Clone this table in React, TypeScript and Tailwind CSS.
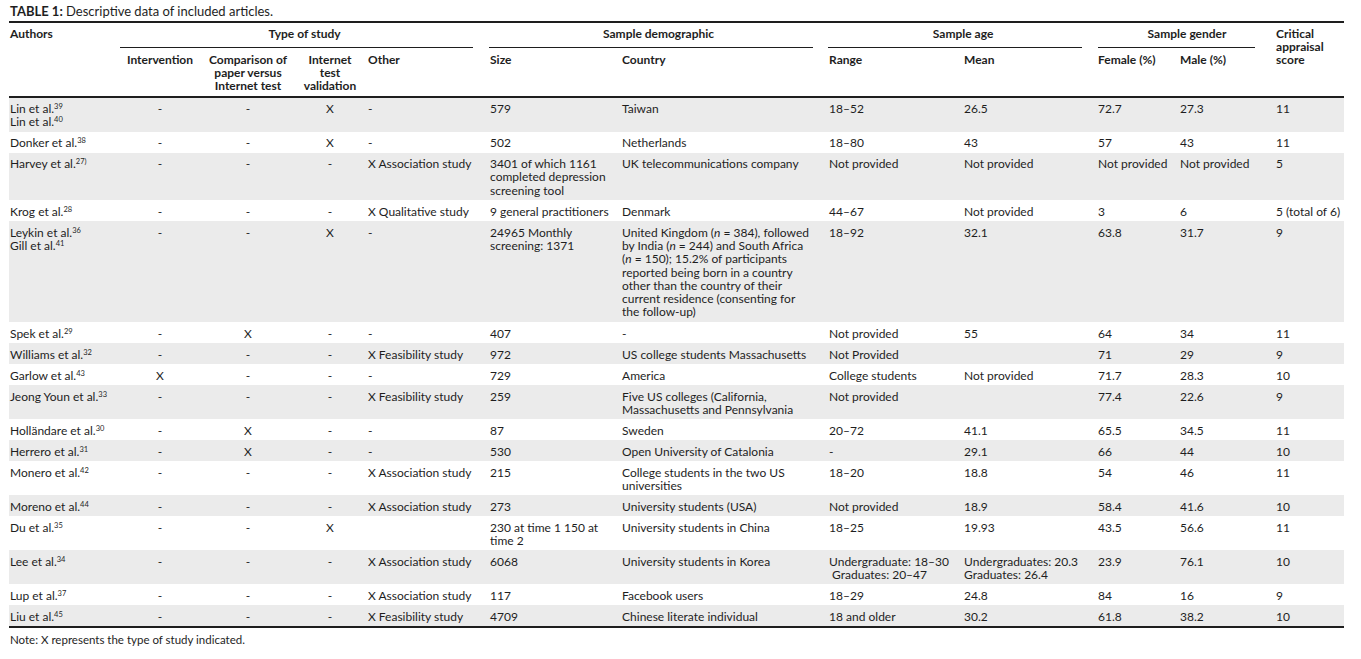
import * as React from "react"

type Row = {
   authors: [string, string][]
   iv: string
   cmp: string
   inet: string
   other: string
   size: string[]
   country: React.ReactNode[]
   range: string[]
   mean: string[]
   f: string
   m: string
   score: string
}

const n = <i>n</i>

const rows: Row[] = [
   { authors: [["Lin et al.", "39"], ["Lin et al.", "40"]], iv: "-", cmp: "-", inet: "X", other: "-", size: ["579"], country: ["Taiwan"], range: ["18–52"], mean: ["26.5"], f: "72.7", m: "27.3", score: "11" },
   { authors: [["Donker et al.", "38"]], iv: "-", cmp: "-", inet: "X", other: "-", size: ["502"], country: ["Netherlands"], range: ["18–80"], mean: ["43"], f: "57", m: "43", score: "11" },
   { authors: [["Harvey et al.", "27)"]], iv: "-", cmp: "-", inet: "-", other: "X Association study", size: ["3401 of which 1161", "completed depression", "screening tool"], country: ["UK telecommunications company"], range: ["Not provided"], mean: ["Not provided"], f: "Not provided", m: "Not provided", score: "5" },
   { authors: [["Krog et al.", "28"]], iv: "-", cmp: "-", inet: "-", other: "X Qualitative study", size: ["9 general practitioners"], country: ["Denmark"], range: ["44–67"], mean: ["Not provided"], f: "3", m: "6", score: "5 (total of 6)" },
   {
      authors: [["Leykin et al.", "36"], ["Gill et al.", "41"]], iv: "-", cmp: "-", inet: "X", other: "-", size: ["24965 Monthly", "screening: 1371"],
      country: [
         <>United Kingdom ({n} = 384), followed</>,
         <>by India ({n} = 244) and South Africa</>,
         <>({n} = 150); 15.2% of participants</>,
         "reported being born in a country",
         "other than the country of their",
         "current residence (consenting for",
         "the follow-up)",
      ],
      range: ["18–92"], mean: ["32.1"], f: "63.8", m: "31.7", score: "9",
   },
   { authors: [["Spek et al.", "29"]], iv: "-", cmp: "X", inet: "-", other: "-", size: ["407"], country: ["-"], range: ["Not provided"], mean: ["55"], f: "64", m: "34", score: "11" },
   { authors: [["Williams et al.", "32"]], iv: "-", cmp: "-", inet: "-", other: "X Feasibility study", size: ["972"], country: ["US college students Massachusetts"], range: ["Not Provided"], mean: [""], f: "71", m: "29", score: "9" },
   { authors: [["Garlow et al.", "43"]], iv: "X", cmp: "-", inet: "-", other: "-", size: ["729"], country: ["America"], range: ["College students"], mean: ["Not provided"], f: "71.7", m: "28.3", score: "10" },
   { authors: [["Jeong Youn et al.", "33"]], iv: "-", cmp: "-", inet: "-", other: "X Feasibility study", size: ["259"], country: ["Five US colleges (California,", "Massachusetts and Pennsylvania"], range: ["Not provided"], mean: [""], f: "77.4", m: "22.6", score: "9" },
   { authors: [["Holländare et al.", "30"]], iv: "-", cmp: "X", inet: "-", other: "-", size: ["87"], country: ["Sweden"], range: ["20–72"], mean: ["41.1"], f: "65.5", m: "34.5", score: "11" },
   { authors: [["Herrero et al.", "31"]], iv: "-", cmp: "X", inet: "-", other: "-", size: ["530"], country: ["Open University of Catalonia"], range: ["-"], mean: ["29.1"], f: "66", m: "44", score: "10" },
   { authors: [["Monero et al.", "42"]], iv: "-", cmp: "-", inet: "-", other: "X Association study", size: ["215"], country: ["College students in the two US", "universities"], range: ["18–20"], mean: ["18.8"], f: "54", m: "46", score: "11" },
   { authors: [["Moreno et al.", "44"]], iv: "-", cmp: "-", inet: "-", other: "X Association study", size: ["273"], country: ["University students (USA)"], range: ["Not provided"], mean: ["18.9"], f: "58.4", m: "41.6", score: "10" },
   { authors: [["Du et al.", "35"]], iv: "-", cmp: "-", inet: "X", other: "", size: ["230 at time 1 150 at", "time 2"], country: ["University students in China"], range: ["18–25"], mean: ["19.93"], f: "43.5", m: "56.6", score: "11" },
   { authors: [["Lee et al.", "34"]], iv: "-", cmp: "-", inet: "-", other: "X Association study", size: ["6068"], country: ["University students in Korea"], range: ["Undergraduate: 18–30", "\u00a0Graduates: 20–47"], mean: ["Undergraduates: 20.3", "Graduates: 26.4"], f: "23.9", m: "76.1", score: "10" },
   { authors: [["Lup et al.", "37"]], iv: "-", cmp: "-", inet: "-", other: "X Association study", size: ["117"], country: ["Facebook users"], range: ["18–29"], mean: ["24.8"], f: "84", m: "16", score: "9" },
   { authors: [["Liu et al.", "45"]], iv: "-", cmp: "-", inet: "-", other: "X Feasibility study", size: ["4709"], country: ["Chinese literate individual"], range: ["18 and older"], mean: ["30.2"], f: "61.8", m: "38.2", score: "10" },
]

// long stacks in the source are set a hair looser than one- or two-liners
function Lines({ items }: { items: React.ReactNode[] }) {
   return (
      <div className={items.length > 2 ? "leading-[13.25px]" : ""}>
         {items.map((t, i) => (
            <div key={i}>{t}</div>
         ))}
      </div>
   )
}

const td = "align-top pt-[4.5px] pb-[3.5px] whitespace-nowrap"
const sub = "pt-[4.5px] pb-[4px] align-top"

export default function App() {
   return (
      <div className="min-h-[659px] w-[1361px] bg-white pl-[9px] pt-[4px] font-[Lato,'Liberation_Sans',sans-serif] text-[12px] leading-[13px] text-[#1e1e1e]">
         <div className="mb-[2px] pl-[1px] text-[13px] leading-[15px]">
            <span className="font-bold">TABLE 1:</span> Descriptive data of included articles.
         </div>

         <table className="w-[1335px] table-fixed border-collapse border-t-2 border-b-2 border-[#1e1e1e]">
            <colgroup>
               <col className="w-[111px]" />
               <col className="w-[80px]" />
               <col className="w-[96px]" />
               <col className="w-[68px]" />
               <col className="w-[125px]" />
               <col className="w-[133px]" />
               <col className="w-[206px]" />
               <col className="w-[136px]" />
               <col className="w-[134px]" />
               <col className="w-[82px]" />
               <col className="w-[96px]" />
               <col className="w-[68px]" />
            </colgroup>
            <thead className="border-b-2 border-[#1e1e1e] font-bold">
               <tr>
                  <th rowSpan={2} className="pt-[4px] pl-[1px] text-left align-top">Authors</th>
                  <th colSpan={4} className="pt-[4px] pb-0 align-top">
                     <div className="pb-[7px] text-center">Type of study</div>
                     <div className="mr-[16px] border-b border-[#1e1e1e]" />
                  </th>
                  <th colSpan={2} className="pt-[4px] pb-0 align-top">
                     <div className="pb-[7px] text-center">Sample demographic</div>
                     <div className="mr-[15px] border-b border-[#1e1e1e]" />
                  </th>
                  <th colSpan={2} className="pt-[4px] pb-0 align-top">
                     <div className="pb-[7px] text-center">Sample age</div>
                     <div className="mr-[16px] border-b border-[#1e1e1e]" />
                  </th>
                  <th colSpan={2} className="pt-[4px] pb-0 align-top">
                     <div className="pb-[7px] text-center">Sample gender</div>
                     <div className="mr-[21px] border-b border-[#1e1e1e]" />
                  </th>
                  <th rowSpan={2} className="pt-[4px] text-left align-top">
                     Critical
                     <br />
                     appraisal
                     <br />
                     score
                  </th>
               </tr>
               <tr>
                  <th className={`${sub} text-center`}>Intervention</th>
                  <th className={`${sub} text-center`}>
                     Comparison of
                     <br />
                     paper versus
                     <br />
                     Internet test
                  </th>
                  <th className={`${sub} text-center`}>
                     Internet
                     <br />
                     test
                     <br />
                     validation
                  </th>
                  <th className={`${sub} pl-[4px] text-left`}>Other</th>
                  <th className={`${sub} pl-[1px] text-left`}>Size</th>
                  <th className={`${sub} text-left`}>Country</th>
                  <th className={`${sub} pl-[1px] text-left`}>Range</th>
                  <th className={`${sub} text-left`}>Mean</th>
                  <th className={`${sub} text-left`}>Female (%)</th>
                  <th className={`${sub} text-left`}>Male (%)</th>
               </tr>
            </thead>
            <tbody>
               {rows.map((r, i) => (
                  <tr key={i} className={i % 2 === 0 ? "bg-[#ebebeb]" : "bg-white"}>
                     <td className={`${td} pl-[1px]`}>
                        {r.authors.map(([name, sup], j) => (
                           <div key={j}>
                              {name}
                              <sup className="text-[7.5px]">{sup}</sup>
                           </div>
                        ))}
                     </td>
                     <td className={`${td} text-center`}>{r.iv}</td>
                     <td className={`${td} text-center`}>{r.cmp}</td>
                     <td className={`${td} text-center`}>{r.inet}</td>
                     <td className={`${td} pl-[4px]`}>{r.other}</td>
                     <td className={`${td} pl-[1px]`}>
                        <Lines items={r.size} />
                     </td>
                     <td className={td}>
                        <Lines items={r.country} />
                     </td>
                     <td className={`${td} pl-[1px]`}>
                        <Lines items={r.range} />
                     </td>
                     <td className={td}>
                        <Lines items={r.mean} />
                     </td>
                     <td className={td}>{r.f}</td>
                     <td className={td}>{r.m}</td>
                     <td className={td}>{r.score}</td>
                  </tr>
               ))}
            </tbody>
         </table>

         <div className="mt-[5px] pl-[1px] text-[11.5px] leading-[13px]">Note: X represents the type of study indicated.</div>
      </div>
   )
}
